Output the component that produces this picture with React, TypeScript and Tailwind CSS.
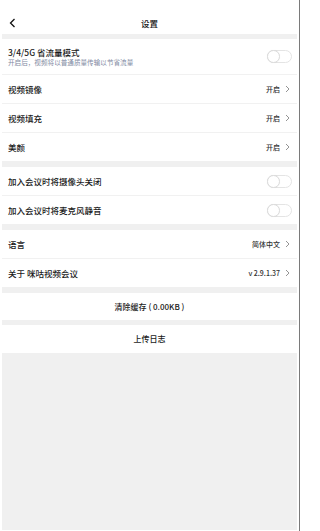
import React from "react";

const font = { fontFamily: '"Noto Sans CJK SC", "Noto Sans", sans-serif' };

function Chevron() {
  return (
    <svg width="5" height="8" viewBox="0 0 5 8" className="ml-[5px]">
      <path d="M1 1 L4 4 L1 7" fill="none" stroke="#888" strokeWidth="0.9" />
    </svg>
  );
}

function Toggle() {
  return (
    <div className="relative w-[25px] h-[13px] rounded-full border border-[#e4e4e4] bg-white">
      <div className="absolute left-[-1px] top-[-1px] w-[13px] h-[13px] rounded-full border border-[#dcdcdc] bg-white shadow-[0_0_1px_rgba(0,0,0,0.08)]" />
    </div>
  );
}

function Divider() {
  return <div className="h-px bg-[#f1f1f1]" />;
}

function Gap({ h }: { h: string }) {
  return <div className={`${h} bg-[#f0f0f0]`} />;
}

function ValueRow({ label, value }: { label: string; value: string }) {
  return (
    <div className="h-[28px] flex items-center justify-between pl-[6px] pr-[7px] bg-white">
      <span className="text-[8.5px] font-medium text-[#1a1a1a]">{label}</span>
      <span className="flex items-center text-[7px] font-medium text-[#333]">
        {value}
        <Chevron />
      </span>
    </div>
  );
}

function ToggleRow({ label }: { label: string }) {
  return (
    <div className="h-[28px] flex items-center justify-between pl-[6px] pr-[5px] bg-white">
      <span className="text-[8.5px] font-medium text-[#1a1a1a]">{label}</span>
      <Toggle />
    </div>
  );
}

export default function App() {
  return (
    <div style={font} className="w-[300px] h-[531px] bg-white border-r border-[#7a7a7a] flex flex-col overflow-hidden">
      <div className="h-[34px] shrink-0 relative flex items-center justify-center">
        <svg width="7" height="10" viewBox="0 0 7 10" className="absolute left-[9px] top-[18px]">
          <path d="M5.5 1 L1.5 5 L5.5 9" fill="none" stroke="#111" strokeWidth="1.3" />
        </svg>
        <span className="text-[8.5px] font-medium text-[#111] mt-[12px]">设置</span>
      </div>
      <div className="flex-1 flex flex-col px-[2px] pb-px">
        <Gap h="h-[5px]" />
        <div className="h-[35px] flex items-center justify-between pl-[6px] pr-[5px] bg-white">
          <div className="flex flex-col">
            <span className="text-[8.5px] font-medium text-[#1a1a1a] leading-[12px]">3/4/5G 省流量模式</span>
            <span className="text-[6.6px] text-[#7f8aa3] leading-[9px]">开启后，视频将以普通质量传输以节省流量</span>
          </div>
          <Toggle />
        </div>
        <Divider />
        <ValueRow label="视频镜像" value="开启" />
        <Divider />
        <ValueRow label="视频填充" value="开启" />
        <Divider />
        <ValueRow label="美颜" value="开启" />
        <Gap h="h-[6px]" />
        <ToggleRow label="加入会议时将摄像头关闭" />
        <Divider />
        <ToggleRow label="加入会议时将麦克风静音" />
        <Gap h="h-[6px]" />
        <ValueRow label="语言" value="简体中文" />
        <Divider />
        <ValueRow label="关于 咪咕视频会议" value="v 2.9.1.37" />
        <Gap h="h-[6px]" />
        <div className="h-[27px] flex items-center justify-center bg-white text-[8px] font-medium text-[#1a1a1a]">清除缓存 ( 0.00KB )</div>
        <Gap h="h-[5px]" />
        <div className="h-[28px] flex items-center justify-center bg-white text-[8px] font-medium text-[#1a1a1a]">上传日志</div>
        <div className="flex-1 bg-[#f0f0f0]" />
      </div>
    </div>
  );
}
